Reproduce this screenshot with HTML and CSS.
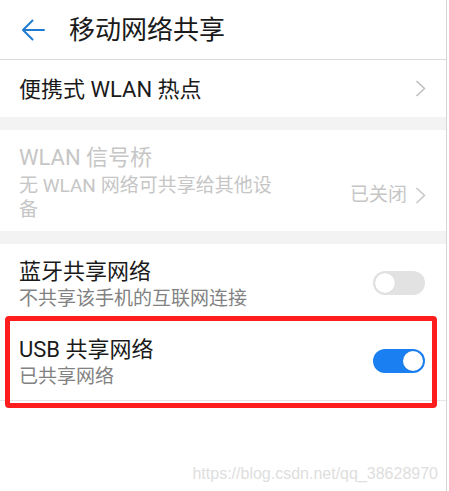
FILE: index.html
```html
<!DOCTYPE html>
<html lang="zh-CN">
<head>
<meta charset="utf-8">
<title>移动网络共享</title>
<link rel="stylesheet" href="styles.css">
</head>
<body>
<div class="page">
  <header class="header">
    <svg class="back" width="24" height="22" viewBox="0 0 24 22">
      <path d="M23 11 H2 M11.5 1.5 L2 11 L11.5 20.5" fill="none" stroke="#1f7bd2" stroke-width="2" stroke-linecap="round" stroke-linejoin="round"/>
    </svg>
    <h1 class="title">移动网络共享</h1>
  </header>

  <div class="row row-single">
    <div class="label">便携式 WLAN 热点</div>
    <svg class="chev" width="11" height="17" viewBox="0 0 11 17"><path d="M1.5 1 L9.5 8.5 L1.5 16" fill="none" stroke="#bdbdbd" stroke-width="1.5"/></svg>
  </div>

  <div class="band"></div>

  <div class="row row-tall disabled">
    <div class="text">
      <div class="label">WLAN 信号桥</div>
      <div class="sub">无 WLAN 网络可共享给其他设备</div>
    </div>
    <div class="status">
      <span>已关闭</span>
      <svg class="chev" width="11" height="17" viewBox="0 0 11 17"><path d="M1.5 1 L9.5 8.5 L1.5 16" fill="none" stroke="#c8c8c8" stroke-width="1.6"/></svg>
    </div>
  </div>

  <div class="band"></div>

  <div class="row row-double">
    <div class="text">
      <div class="label">蓝牙共享网络</div>
      <div class="sub">不共享该手机的互联网连接</div>
    </div>
    <div class="toggle"><span class="knob"></span></div>
  </div>

  <div class="row row-double row-last">
    <div class="text">
      <div class="label">USB 共享网络</div>
      <div class="sub">已共享网络</div>
    </div>
    <div class="toggle on"><span class="knob"></span></div>
    <div class="highlight"></div>
  </div>

  <div class="footer">
    <span class="watermark">https://blog.csdn.net/qq_38628970</span>
  </div>
</div>
</body>
</html>
```

FILE: styles.css
```css
html, body {
  margin: 0;
  padding: 0;
  background: #ffffff;
}

body {
  font-family: Roboto, "Noto Sans CJK SC", sans-serif;
  color: #1a1a1a;
}

.page {
  width: 446px;
  min-height: 491px;
  border-right: 1px solid #d4d4d4;
  background: #ffffff;
  display: flex;
  flex-direction: column;
}

.header {
  height: 59px;
  border-bottom: 1px solid #dadada;
  display: flex;
  align-items: center;
  padding-left: 21px;
  box-sizing: content-box;
}

.back {
  display: block;
  margin-top: 1px;
}

.title {
  margin: 0 0 0 24px;
  font-size: 26px;
  font-weight: 400;
  line-height: 34px;
  color: #1a1a1a;
}

.row {
  display: flex;
  justify-content: space-between;
  padding: 0 21px 0 19px;
  background: #ffffff;
}

.row-single {
  height: 57px;
  align-items: center;
  padding-right: 20px;
}

.row-single .label {
  margin-top: 2px;
}

.label {
  font-size: 22px;
  line-height: 30px;
}

.sub {
  font-size: 19px;
  line-height: 24px;
  color: #828282;
}

.band {
  height: 13px;
  background: #f3f3f3;
}

.row-tall {
  height: 101px;
  box-sizing: border-box;
  padding-top: 13px;
  padding-right: 20px;
}

.row-tall .sub {
  width: 262px;
  margin-top: 1px;
}

.disabled .label,
.disabled .sub,
.disabled .status {
  color: #c6c6c6;
}

.status {
  display: flex;
  align-items: center;
  gap: 8px;
  font-size: 19px;
  line-height: 24px;
  margin-top: 40px;
  align-self: flex-start;
}

.chev {
  display: block;
}

.row-double {
  height: 78px;
  box-sizing: border-box;
  padding-top: 13px;
  align-items: flex-start;
}

.row-last {
  position: relative;
  border-bottom: 1px solid #e6e6e6;
  height: 79px;
}

.toggle {
  width: 52px;
  height: 24px;
  border-radius: 12px;
  background: #e2e2e2;
  margin-top: 14px;
  position: relative;
  flex: none;
}

.knob {
  position: absolute;
  top: 2px;
  left: 2px;
  width: 20px;
  height: 20px;
  border-radius: 50%;
  background: #ffffff;
  box-shadow: 0 0 1px rgba(0, 0, 0, 0.15);
}

.toggle.on {
  background: #1a7ff0;
}

.toggle.on .knob {
  left: 30px;
}

.highlight {
  position: absolute;
  left: 5px;
  right: 9px;
  top: -6px;
  bottom: -8px;
  border: 5px solid #ff1e1e;
  border-radius: 4px;
  pointer-events: none;
}

.footer {
  flex: 1;
  display: flex;
  justify-content: flex-end;
  align-items: flex-end;
  padding: 0 8px 8px 0;
}

.watermark {
  font-family: "Liberation Sans", Arial, sans-serif;
  font-size: 16px;
  line-height: 18px;
  color: #dedede;
}
```
